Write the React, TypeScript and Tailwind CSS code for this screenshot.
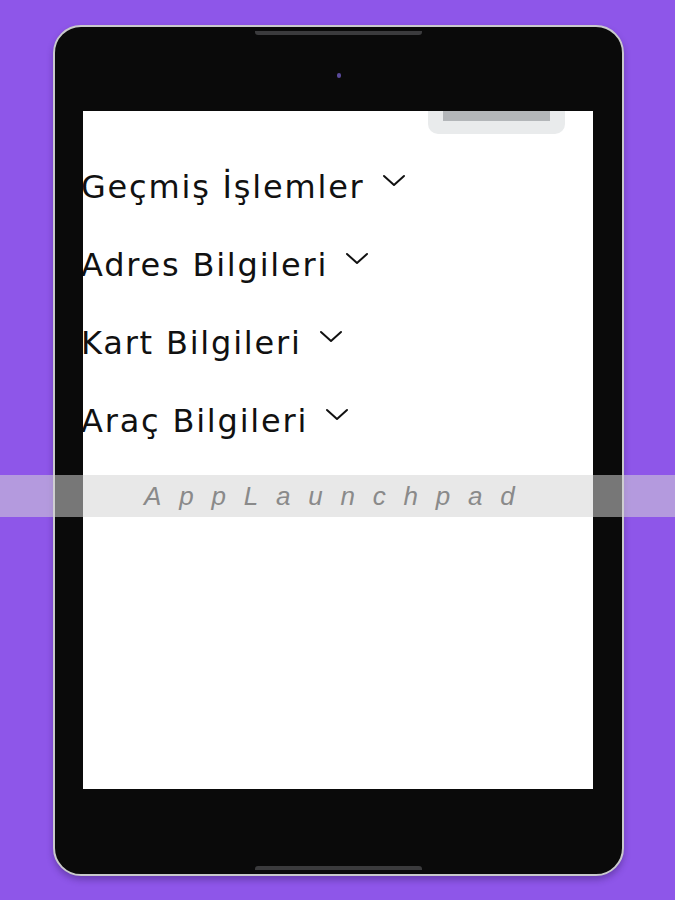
import React from "react";

const items = ["Geçmiş İşlemler", "Adres Bilgileri", "Kart Bilgileri", "Araç Bilgileri"];

function Chevron() {
  return (
    <svg width="24" height="14" viewBox="0 0 24 14" className="shrink-0 mt-[-14px]">
      <path d="M2 2 L12 11 L22 2" fill="none" stroke="#111" strokeWidth="2" strokeLinecap="round" strokeLinejoin="round" />
    </svg>
  );
}

export default function App() {
  return (
    <div className="relative w-[675px] h-[900px] bg-[#8e56e9] overflow-hidden">
      <div className="pt-[25px] pl-[53px]">
        <div className="w-[571px] h-[851px] rounded-[28px] border-[2px] border-[#c9c9cc] bg-[#0a0a0a] shadow-[0_4px_6px_rgba(40,20,80,0.35)] flex flex-col items-center">
          <div className="mt-[4px] w-[167px] h-[4px] rounded-b-[3px] bg-[#3b3b3d]" />
          <div className="mt-[38px] w-[4px] h-[5px] rounded-full bg-[#5a4a9a]" />
          <div className="mt-[33px] mr-[1px] w-[510px] h-[678px] bg-white overflow-hidden flex flex-col">
            <div className="self-end mr-[28px] mt-[-10px] w-[137px] h-[33px] rounded-[10px] bg-[#e9ebec] px-[15px] pt-[10px]">
              <div className="h-[10px] bg-[#b3b6b9]" />
            </div>
            <div className="flex flex-col pt-[31px] ml-[-2px] gap-[33px]" style={{ fontFamily: "'DejaVu Sans', sans-serif" }}>
              {items.map((t) => (
                <div key={t} className="flex items-center gap-[17px] h-[45px]">
                  <span className="text-[32px] leading-[45px] text-[#111] whitespace-nowrap tracking-[1.8px]">{t}</span>
                  <Chevron />
                </div>
              ))}
            </div>
          </div>
          <div className="flex-1" />
          <div className="mb-[4px] w-[167px] h-[4px] rounded-t-[3px] bg-[#3b3b3d]" />
        </div>
      </div>
      <div className="absolute left-0 top-[475px] w-full h-[42px] bg-[rgba(213,213,213,0.54)] flex items-center pl-[144px]">
        <span className="text-[26px] italic text-[#8a8a8a] tracking-[17.8px]" style={{ fontFamily: "'Liberation Sans', Arial, sans-serif" }}>
          AppLaunchpad
        </span>
      </div>
    </div>
  );
}
